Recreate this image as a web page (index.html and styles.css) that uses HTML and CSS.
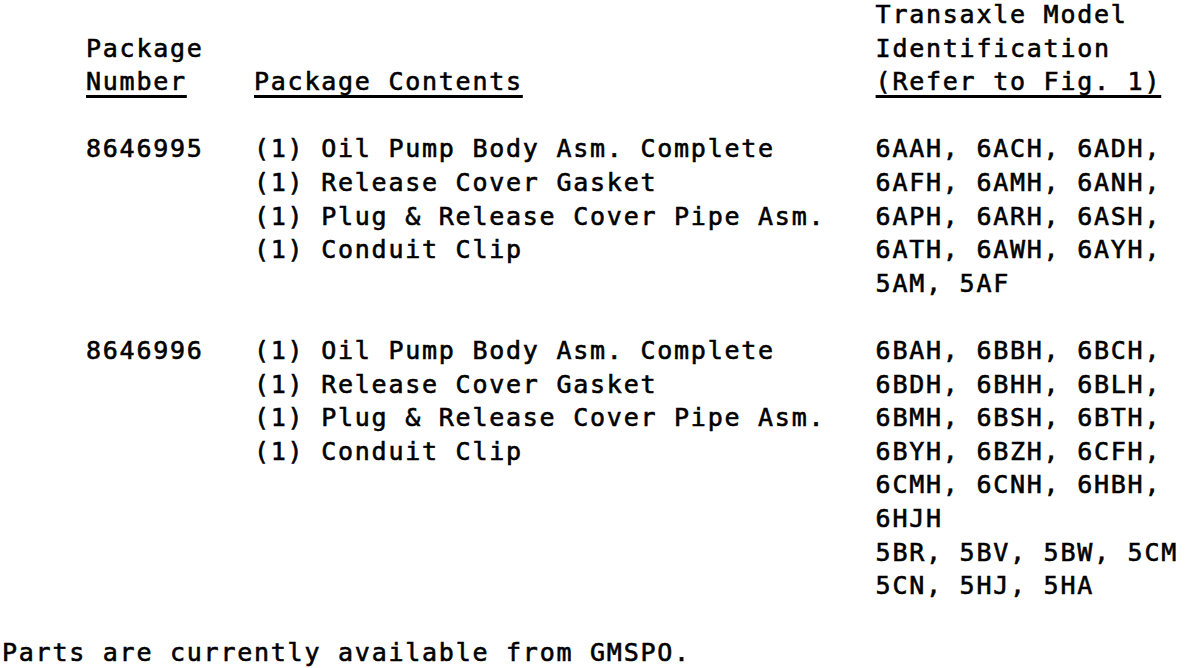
FILE: index.html
```html
<!DOCTYPE html>
<html lang="en">
<head>
<meta charset="utf-8">
<title>Oil Pump Body Packages</title>
<link rel="stylesheet" href="styles.css">
</head>
<body>
<main class="page">
  <section class="parts">
    <div class="head head-num">
      <div>Package</div>
      <div class="ul">Number</div>
    </div>
    <div class="head head-contents">
      <div class="ul">Package Contents</div>
    </div>
    <div class="head head-model">
      <div>Transaxle Model</div>
      <div>Identification</div>
      <div class="ul">(Refer to Fig. 1)</div>
    </div>

    <div class="num">8646995</div>
    <div class="contents">
      <div>(1) Oil Pump Body Asm. Complete</div>
      <div>(1) Release Cover Gasket</div>
      <div>(1) Plug &amp; Release Cover Pipe Asm.</div>
      <div>(1) Conduit Clip</div>
    </div>
    <div class="models">
      <div>6AAH, 6ACH, 6ADH,</div>
      <div>6AFH, 6AMH, 6ANH,</div>
      <div>6APH, 6ARH, 6ASH,</div>
      <div>6ATH, 6AWH, 6AYH,</div>
      <div>5AM, 5AF</div>
    </div>

    <div class="num">8646996</div>
    <div class="contents">
      <div>(1) Oil Pump Body Asm. Complete</div>
      <div>(1) Release Cover Gasket</div>
      <div>(1) Plug &amp; Release Cover Pipe Asm.</div>
      <div>(1) Conduit Clip</div>
    </div>
    <div class="models">
      <div>6BAH, 6BBH, 6BCH,</div>
      <div>6BDH, 6BHH, 6BLH,</div>
      <div>6BMH, 6BSH, 6BTH,</div>
      <div>6BYH, 6BZH, 6CFH,</div>
      <div>6CMH, 6CNH, 6HBH,</div>
      <div>6HJH</div>
      <div>5BR, 5BV, 5BW, 5CM</div>
      <div>5CN, 5HJ, 5HA</div>
    </div>
  </section>
  <p class="note">Parts are currently available from GMSPO.</p>
</main>
</body>
</html>
```

FILE: styles.css
```css
html, body {
  margin: 0;
  padding: 0;
  background: #ffffff;
}

.page {
  margin-top: -2px;
  padding: 0 0 0 2px;
  font-family: "DejaVu Sans Mono", "Liberation Mono", monospace;
  font-size: 25px;
  line-height: 33.6px;
  letter-spacing: 1.75px;
  color: #000000;
  -webkit-text-stroke: 0.6px #000000;
  white-space: nowrap;
}

.parts {
  margin-left: 84px;
  display: grid;
  grid-template-columns: 168px 621.6px 1fr;
  row-gap: 33.6px;
}

.head {
  align-self: end;
}

.ul {
  display: inline-block;
  text-decoration: underline;
  text-decoration-thickness: 3px;
  text-underline-offset: 5px;
}

.note {
  margin: 33.6px 0 0 0;
}
```
